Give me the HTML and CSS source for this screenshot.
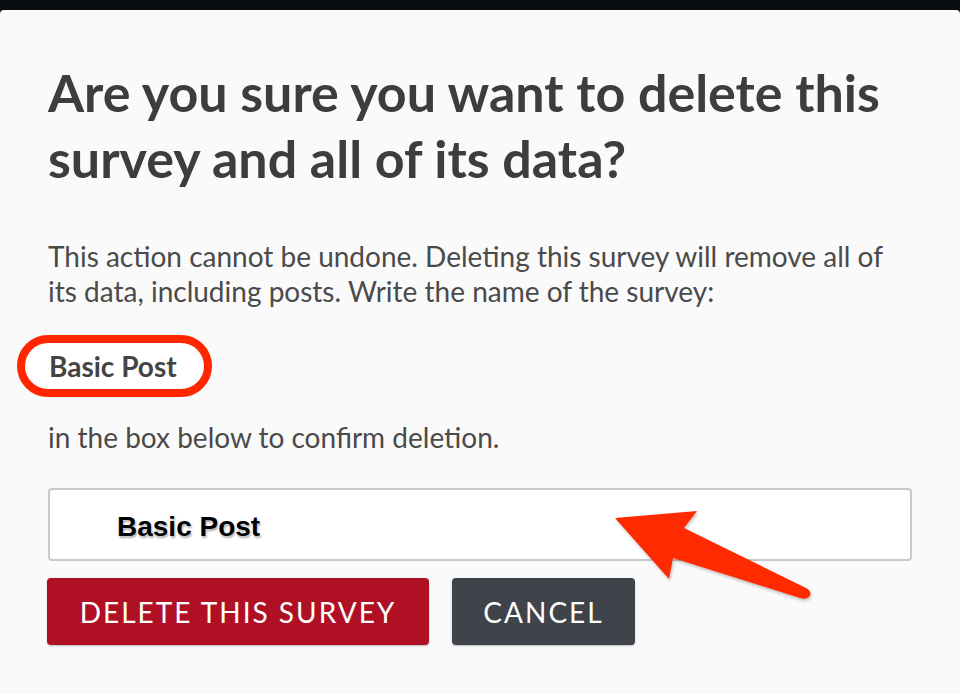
FILE: index.html
```html
<!DOCTYPE html>
<html>
<head>
<meta charset="utf-8">
<link rel="stylesheet" href="styles.css">
</head>
<body>
<div class="topbar"></div>
<div class="panel">
  <h1 class="title">Are you sure you want to delete this survey and all of its data?</h1>
  <p class="desc">This action cannot be undone. Deleting this survey will remove all of its data, including posts. Write the name of the survey:</p>
  <div class="name-row"><span class="name-pill">Basic Post</span></div>
  <p class="desc confirm">in the box below to confirm deletion.</p>
  <div class="field"><span class="field-text">Basic Post</span></div>
  <div class="actions">
    <button class="btn btn-delete">DELETE THIS SURVEY</button>
    <button class="btn btn-cancel">CANCEL</button>
  </div>
  <svg class="arrow" width="960" height="694" viewBox="0 0 960 694">
    <defs>
      <filter id="sh" x="-10%" y="-10%" width="130%" height="130%">
        <feDropShadow dx="1" dy="2" stdDeviation="1.5" flood-color="#000" flood-opacity="0.25"/>
      </filter>
    </defs>
    <path filter="url(#sh)" fill="#ff2a00" d="M615 518 L697 511 L684 528 L806 588 Q813 592 809 597 Q805 600 800 598 L673 558 L669 579 Z"/>
  </svg>
</div>
</body>
</html>
```
FILE: styles.css
```css
html, body {
  margin: 0;
  padding: 0;
  background: #0b0e10;
}
body {
  width: 960px;
  height: 694px;
  overflow: hidden;
  font-family: Lato, "Open Sans", sans-serif;
}
.topbar {
  height: 10px;
  background: #0b0e10;
}
.panel {
  position: relative;
  background: #fafafa;
  border-radius: 4px 4px 0 0;
  height: 684px;
  box-sizing: border-box;
  padding: 49px 48px 0 48px;
  color: #444;
}
.title {
  margin: 0;
  font-size: 52px;
  font-weight: 700;
  line-height: 66px;
  color: #3d3d3d;
}
.desc {
  margin: 48px 0 0 0;
  font-size: 28px;
  line-height: 35px;
  font-weight: 400;
  color: #4a4a4a;
}
.name-row {
  margin: 26px 0 0 -31px;
  display: flex;
}
.name-pill {
  display: inline-flex;
  align-items: center;
  height: 46px;
  padding: 0 27px 0 24px;
  border: 8px solid #ff2600;
  border-radius: 40px;
  background: #fff;
  font-size: 28px;
  font-weight: 700;
  color: #444;
}
.desc.confirm {
  margin-top: 23px;
}
.field {
  margin-top: 33px;
  height: 69px;
  border: 2px solid #c9c9c9;
  border-radius: 4px;
  background: #fff;
  display: flex;
  align-items: center;
  padding-left: 67px;
}
.field-text {
  font-family: "Liberation Sans", Arial, sans-serif;
  font-weight: 700;
  font-size: 28px;
  color: #000;
  text-shadow: 0 0 2px #fff, 1px 2px 2px rgba(0,0,0,0.35);
  padding-top: 4px;
}
.actions {
  display: flex;
  gap: 23px;
  margin-top: 17px;
  margin-left: -1px;
}
.btn {
  height: 67px;
  border: none;
  border-radius: 4px;
  color: #fff;
  font-family: Lato, sans-serif;
  font-size: 28px;
  font-weight: 400;
  letter-spacing: 2px;
  box-shadow: 0 1px 2px rgba(0,0,0,0.25);
  padding: 0;
}
.btn-delete {
  width: 382px;
  background: #b01024;
}
.btn-cancel {
  width: 183px;
  background: #3f444b;
}
.arrow {
  position: absolute;
  left: 0;
  top: -10px;
  pointer-events: none;
}
```
